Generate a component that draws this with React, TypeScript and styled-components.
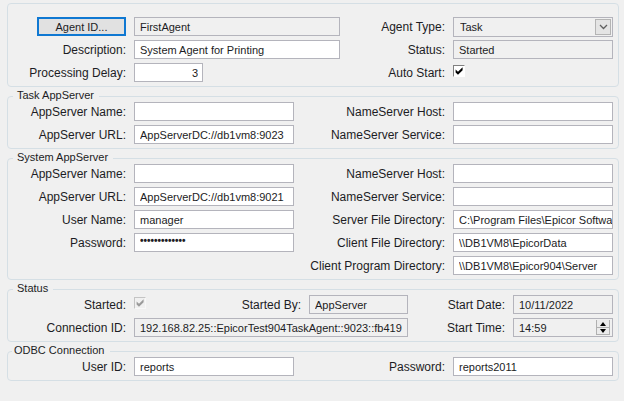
import React, { useState } from "react";
import styled, { createGlobalStyle } from "styled-components";

const GlobalStyle = createGlobalStyle`
  * { box-sizing: border-box; }
  body {
    margin: 0;
    background: #f0f0f0;
    color: #1c1c24;
    font: 11px/14px "Liberation Sans", Arial, sans-serif;
  }
  input, select, button { font: inherit; color: inherit; }
`;

const Page = styled.form`
  display: flex;
  flex-direction: column;
  gap: 4px;
  padding: 3px 5px 16px 7px;
`;

const Group = styled.fieldset<{ $columns: string; $plain?: boolean }>`
  display: grid;
  grid-template-columns: ${(p) => p.$columns};
  gap: 4px 8px;
  margin: 0;
  min-width: 0;
  padding: ${(p) => (p.$plain ? "13px" : "0")} 5px 4px 0;
  border: 1px solid #d5dfe5;
  border-radius: 4px;
`;

const Legend = styled.legend<{ $near?: boolean }>`
  margin-left: ${(p) => (p.$near ? 4 : 5)}px;
  padding: 0 5px 3px ${(p) => (p.$near ? 2 : 4)}px;
  line-height: 8px;
`;

const Label = styled.label<{ $column?: number }>`
  grid-column: ${(p) => p.$column ?? "auto"};
  align-self: center;
  font-size: 12px;
  text-align: right;
  white-space: nowrap;
`;

const Field = styled.input<{ $align?: string }>`
  width: 100%;
  min-width: 0;
  height: 19px;
  padding: 0 0 0 5px;
  border: 1px solid #b4b4bc;
  border-radius: 0;
  outline: 0;
  background: #fff;
  text-align: ${(p) => p.$align ?? "left"};
  &:read-only { background: #f0f0f0; }
  &[type="password"] {
    padding-bottom: 4px;
    font-size: 10px;
    font-weight: bold;
  }
`;

const ShortField = styled(Field)`
  width: 69px;
  padding-right: 4px;
`;

const AgentButton = styled.button`
  justify-self: end;
  width: 89px;
  height: 19px;
  padding: 0;
  border: 2px solid #0f78d2;
  background: #e1e1e1;
`;

const Combo = styled.div`
  position: relative;
  height: 20px;
  margin-bottom: -1px;
`;

const ComboSelect = styled.select`
  appearance: none;
  width: 100%;
  height: 20px;
  padding: 0 6px;
  border: 1px solid #b4b4bc;
  border-radius: 0;
  outline: 0;
  background: #f0f0f0;
`;

const ComboArrow = styled.span`
  position: absolute;
  top: 2px;
  right: 2px;
  display: grid;
  place-items: center;
  width: 16px;
  height: 16px;
  border: 1px solid #b4b4b4;
  background: #e4e4e4;
  pointer-events: none;
`;

const Check = styled.span`
  position: relative;
  width: 12px;
  height: 12px;
  margin-top: 2px;
  svg { position: absolute; inset: 0; pointer-events: none; }
`;

const CheckInput = styled.input`
  appearance: none;
  display: block;
  width: 12px;
  height: 12px;
  margin: 0;
  border: 1px solid #fff;
  border-top-color: #808080;
  border-left-color: #808080;
  background: #fff;
  &:disabled {
    border-color: #c4c4c4 #f8f8f8 #f8f8f8 #c4c4c4;
    background: #f0f0f0;
  }
`;

const StartedRow = styled.div`
  display: grid;
  grid-template-columns: 12px 1fr 99px;
  column-gap: 8px;
`;

const Spin = styled.div`
  display: flex;
  height: 19px;
  padding: 1px 2px 1px 0;
  border: 1px solid #b4b4bc;
`;

const SpinInput = styled.input`
  flex: 1;
  min-width: 0;
  padding: 0 5px;
  border: 0;
  outline: 0;
  background: transparent;
`;

const SpinButtons = styled.div`
  display: grid;
  grid-template-rows: 8px 7px;
  width: 14px;
`;

const SpinButton = styled.button`
  display: grid;
  place-items: center;
  padding: 0;
  border: 1px solid #b0b0b0;
  border-top-width: 0;
  background: #ebebeb;
`;

const TickMark = ({ color }: { color: string }) => (
  <svg width="12" height="12" viewBox="0 0 12 12" aria-hidden="true">
    <path d="M2.6 4.4 L5 6.8 L9.6 2.2 V5.2 L5 9.8 L2.6 7.4Z" fill={color} />
  </svg>
);

type TextProps = {
  id: string;
  label: string;
  value?: string;
  type?: string;
  readOnly?: boolean;
  column?: number;
};

const TextRow = ({ id, label, value = "", type = "text", readOnly, column }: TextProps) => (
  <>
    <Label htmlFor={id} $column={column}>{label}</Label>
    <Field id={id} type={type} defaultValue={value} readOnly={readOnly} />
  </>
);

const paired = "118px minmax(0, 160fr) 143px minmax(0, 160fr)";

export default function App() {
  const [autoStart, setAutoStart] = useState(true);
  return (
    <>
      <GlobalStyle />
      <Page>
        <Group $plain $columns="118px minmax(0, 206fr) 97px minmax(0, 160fr)">
          <AgentButton type="button">Agent ID...</AgentButton>
          <Field aria-label="Agent ID" defaultValue="FirstAgent" readOnly />
          <Label htmlFor="agent-type">Agent Type:</Label>
          <Combo>
            <ComboSelect id="agent-type" defaultValue="Task">
              <option>Task</option>
            </ComboSelect>
            <ComboArrow>
              <svg width="9" height="6" viewBox="0 0 9 6" aria-hidden="true">
                <path d="M1 1 L4.5 4.5 L8 1" fill="none" stroke="#606060" strokeWidth="1.3" />
              </svg>
            </ComboArrow>
          </Combo>
          <TextRow id="description" label="Description:" value="System Agent for Printing" />
          <TextRow id="agent-status" label="Status:" value="Started" readOnly />
          <Label htmlFor="delay">Processing Delay:</Label>
          <ShortField id="delay" defaultValue="3" $align="right" />
          <Label htmlFor="auto-start">Auto Start:</Label>
          <Check>
            <CheckInput
              id="auto-start"
              type="checkbox"
              checked={autoStart}
              onChange={(e) => setAutoStart(e.target.checked)}
            />
            {autoStart && <TickMark color="#000" />}
          </Check>
        </Group>

        <Group $columns={paired}>
          <Legend>Task AppServer</Legend>
          <TextRow id="task-name" label="AppServer Name:" />
          <TextRow id="task-host" label="NameServer Host:" />
          <TextRow id="task-url" label="AppServer URL:" value="AppServerDC://db1vm8:9023" />
          <TextRow id="task-service" label="NameServer Service:" />
        </Group>

        <Group $columns={paired}>
          <Legend>System AppServer</Legend>
          <TextRow id="sys-name" label="AppServer Name:" />
          <TextRow id="sys-host" label="NameServer Host:" />
          <TextRow id="sys-url" label="AppServer URL:" value="AppServerDC://db1vm8:9021" />
          <TextRow id="sys-service" label="NameServer Service:" />
          <TextRow id="user-name" label="User Name:" value="manager" />
          <TextRow id="server-dir" label="Server File Directory:" value="C:\Program Files\Epicor Softwa" />
          <TextRow id="sys-password" label="Password:" type="password" value="*************" />
          <TextRow id="client-dir" label="Client File Directory:" value="\\DB1VM8\EpicorData" />
          <TextRow id="program-dir" label="Client Program Directory:" value="\\DB1VM8\Epicor904\Server" column={3} />
        </Group>

        <Group $columns="118px minmax(0, 274fr) 89px minmax(0, 100fr)">
          <Legend>Status</Legend>
          <Label htmlFor="started">Started:</Label>
          <StartedRow>
            <Check>
              <CheckInput id="started" type="checkbox" defaultChecked disabled />
              <TickMark color="#9a9a9a" />
            </Check>
            <TextRow id="started-by" label="Started By:" value="AppServer" readOnly />
          </StartedRow>
          <TextRow id="start-date" label="Start Date:" value="10/11/2022" readOnly />
          <TextRow id="connection" label="Connection ID:" value="192.168.82.25::EpicorTest904TaskAgent::9023::fb419" readOnly />
          <Label htmlFor="start-time">Start Time:</Label>
          <Spin>
            <SpinInput id="start-time" defaultValue="14:59" readOnly />
            <SpinButtons>
              <SpinButton type="button" aria-label="Later">
                <svg width="6" height="4" viewBox="0 0 6 4"><path d="M0 4 L3 0 L6 4Z" /></svg>
              </SpinButton>
              <SpinButton type="button" aria-label="Earlier">
                <svg width="6" height="4" viewBox="0 0 6 4"><path d="M0 0 L3 4 L6 0Z" /></svg>
              </SpinButton>
            </SpinButtons>
          </Spin>
        </Group>

        <Group $columns={paired}>
          <Legend $near>ODBC Connection</Legend>
          <TextRow id="odbc-user" label="User ID:" value="reports" />
          <TextRow id="odbc-password" label="Password:" value="reports2011" />
        </Group>
      </Page>
    </>
  );
}
